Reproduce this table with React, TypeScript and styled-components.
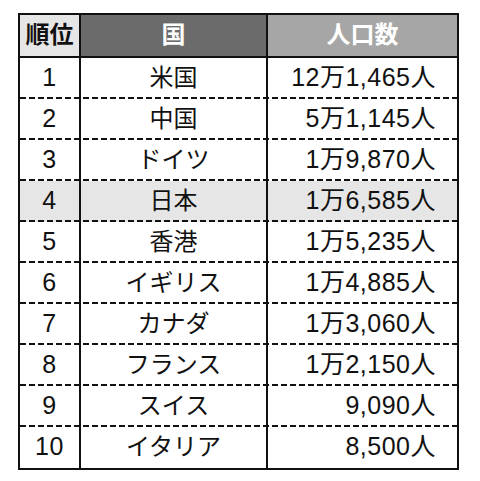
import React from 'react';
import styled, { createGlobalStyle } from 'styled-components';

const GlobalStyle = createGlobalStyle`
  html, body {
    margin: 0;
    padding: 0;
    background: #fff;
  }
  body {
    font-family: 'Liberation Sans', 'Noto Sans CJK JP', sans-serif;
    color: #111;
  }
`;

const Page = styled.div`
  padding: 13px 0 0 18px;
`;

const Table = styled.div`
  width: 441px;
  border: 2px solid #111;
  box-sizing: border-box;
`;

const Row = styled.div<{ header?: boolean; shaded?: boolean; last?: boolean }>`
  display: grid;
  grid-template-columns: 61px 187px 1fr;
  height: ${p => (p.header ? 43 : 41)}px;
  box-sizing: border-box;
  border-bottom: ${p => (p.header ? '2px solid #111' : 'none')};
  background: ${p =>
    p.header || p.last
      ? 'transparent'
      : `repeating-linear-gradient(to right, #111 0 6px, transparent 6px 9px) left bottom / 100% 2px no-repeat`};
  background-color: ${p => (p.shaded ? '#e6e6e6' : 'transparent')};
`;

const Cell = styled.div<{ align?: 'center' | 'right'; bg?: string; light?: boolean }>`
  display: flex;
  align-items: center;
  justify-content: ${p => (p.align === 'right' ? 'flex-end' : 'center')};
  padding-right: ${p => (p.align === 'right' ? '21px' : '0')};
  padding-bottom: 2px;
  box-sizing: border-box;
  font-size: 24px;
  line-height: 1;
  font-weight: ${p => (p.bg ? 700 : 400)};
  color: ${p => (p.light ? '#fff' : '#111')};
  background: ${p => p.bg || 'transparent'};
  border-right: 2px solid #111;
  &:last-child {
    border-right: none;
  }
`;

const Num = styled.span`
  font-size: 25px;
  letter-spacing: 0.5px;
`;

const rows = [
  { rank: 1, country: '米国', pop: '12万1,465人' },
  { rank: 2, country: '中国', pop: '5万1,145人' },
  { rank: 3, country: 'ドイツ', pop: '1万9,870人' },
  { rank: 4, country: '日本', pop: '1万6,585人' },
  { rank: 5, country: '香港', pop: '1万5,235人' },
  { rank: 6, country: 'イギリス', pop: '1万4,885人' },
  { rank: 7, country: 'カナダ', pop: '1万3,060人' },
  { rank: 8, country: 'フランス', pop: '1万2,150人' },
  { rank: 9, country: 'スイス', pop: '9,090人' },
  { rank: 10, country: 'イタリア', pop: '8,500人' }
];

export default function App() {
  return (
    <>
      <GlobalStyle />
      <Page>
        <Table>
          <Row header>
            <Cell bg="#e6e6e6">順位</Cell>
            <Cell bg="#6b6b6b" light>
              国
            </Cell>
            <Cell bg="#a6a6a6" light>
              人口数
            </Cell>
          </Row>
          {rows.map((r, i) => (
            <Row key={r.rank} shaded={r.country === '日本'} last={i === rows.length - 1}>
              <Cell>
                <Num>{r.rank}</Num>
              </Cell>
              <Cell>{r.country}</Cell>
              <Cell align="right">
                <Num>{r.pop}</Num>
              </Cell>
            </Row>
          ))}
        </Table>
      </Page>
    </>
  );
}
